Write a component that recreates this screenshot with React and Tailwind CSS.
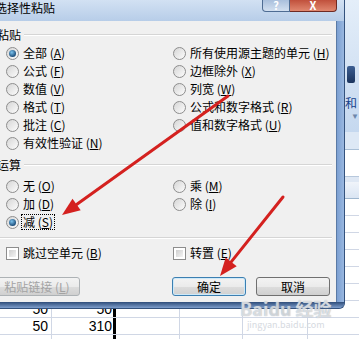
import React from 'react'

const pasteRows = [
  [{ t: '全部', k: 'A', on: true }, { t: '所有使用源主题的单元', k: 'H' }],
  [{ t: '公式', k: 'F' }, { t: '边框除外', k: 'X' }],
  [{ t: '数值', k: 'V' }, { t: '列宽', k: 'W' }],
  [{ t: '格式', k: 'T' }, { t: '公式和数字格式', k: 'R' }],
  [{ t: '批注', k: 'C' }, { t: '值和数字格式', k: 'U' }],
  [{ t: '有效性验证', k: 'N' }, null],
]

const opRows = [
  [{ t: '无', k: 'O' }, { t: '乘', k: 'M' }],
  [{ t: '加', k: 'D' }, { t: '除', k: 'I' }],
  [{ t: '减', k: 'S', on: true, focus: true }, null],
]

const Label = ({ t, k }) => (
  <span className="whitespace-nowrap">
    {t} (<span className="underline">{k}</span>)
  </span>
)

const Radio = ({ on }) => (
  <span className="w-[13px] h-[13px] shrink-0 rounded-full border border-[#8d8d8d] bg-linear-to-br from-[#d6d6d6] to-[#fcfcfc] flex items-center justify-center">
    {on && <span className="w-[7px] h-[7px] rounded-full bg-[radial-gradient(circle_at_40%_35%,#7cc3ee,#1d4f7c_70%)]" />}
  </span>
)

const Check = () => (
  <span className="w-[13px] h-[13px] shrink-0 border border-[#8d8d8d] bg-white p-[2px]">
    <span className="block w-full h-full bg-linear-to-br from-[#cfcfcf] to-[#f4f4f4]" />
  </span>
)

const Option = ({ o }) => {
  if (!o) return <div className="h-[18px]" />
  return (
    <div className="h-[18px] flex items-center">
      <Radio on={o.on} />
      {o.focus ? (
        <span className="ml-[2px] px-[1px] border border-dotted border-black leading-[14px]">
          <Label {...o} />
        </span>
      ) : (
        <span className="ml-[4px]">
          <Label {...o} />
        </span>
      )}
    </div>
  )
}

const Header = ({ text, className }) => (
  <div className={`h-[16px] flex items-center -ml-[3px] mr-[4px] ${className}`}>
    <span>{text}</span>
    <span className="flex-1 ml-[3px] border-t border-[#d5d5d5] border-b border-b-white" />
  </div>
)

const btn =
  'h-[19px] rounded-[3px] border flex items-center justify-center bg-[linear-gradient(#f3f3f3,#ebebeb_50%,#dddddd_50%,#d0d0d0)]'

function Dialog() {
  return (
    <div className="absolute left-0 top-0 w-[345px] h-[309px] flex flex-col bg-[#86a8d6] border-r border-b border-[#34527d] rounded-br-[6px] overflow-hidden">
      <div className="h-[21px] shrink-0 flex items-start bg-linear-to-b from-[#d2e1f3] to-[#b7cde8]">
        <span className="-ml-[5px] mt-[1px] leading-[13px] text-[12px] text-black">选择性粘贴</span>
        <div className="ml-auto mr-[7px] flex">
          <div className="w-[28px] h-[12px] rounded-bl-[4px] border border-t-0 border-[#4e6c93] bg-linear-to-b from-[#a9bfdc] to-[#d3e0f0] flex items-end justify-center text-[11px] leading-[11px] font-bold text-white">
            ?
          </div>
          <div className="w-[47px] h-[12px] rounded-br-[4px] border border-t-0 border-l-0 border-[#6e2a23] bg-linear-to-b from-[#c0503c] to-[#e0876f] flex items-end justify-center text-[11px] leading-[11px] font-bold text-white">
            X
          </div>
        </div>
      </div>
      <div className="flex-1 flex">
        <div className="w-[337px] bg-[#f0f0f0] border-r border-[#5a7aa5] flex flex-col text-[12px] leading-[14px] text-black">
          <Header text="粘贴" className="mt-[6px]" />
          <div className="mt-[1px] pl-[6px] grid grid-cols-[167px_1fr]">
            {pasteRows.map((r, i) => (
              <React.Fragment key={i}>
                <Option o={r[0]} />
                <Option o={r[1]} />
              </React.Fragment>
            ))}
          </div>
          <Header text="运算" className="mt-[5px]" />
          <div className="mt-[4px] pl-[6px] grid grid-cols-[167px_1fr]">
            {opRows.map((r, i) => (
              <React.Fragment key={i}>
                <Option o={r[0]} />
                <Option o={r[1]} />
              </React.Fragment>
            ))}
          </div>
          <div className="mt-[6px] mr-[4px] border-t border-[#d5d5d5] border-b border-b-white" />
          <div className="mt-[5px] pl-[6px] grid grid-cols-[167px_1fr]">
            <div className="h-[18px] flex items-center">
              <Check />
              <span className="ml-[4px]">
                <Label t="跳过空单元" k="B" />
              </span>
            </div>
            <div className="h-[18px] flex items-center">
              <Check />
              <span className="ml-[4px]">
                <Label t="转置" k="E" />
              </span>
            </div>
          </div>
          <div className="mt-[15px] flex">
            <div className={`${btn} -ml-[6px] w-[86px] border-[#adb2b5] text-[#a3a3a3] bg-[#f4f4f4]`}>
              <Label t="粘贴链接" k="L" />
            </div>
            <div className={`${btn} ml-[92px] w-[74px] border-[#3c7fb1] shadow-[inset_0_0_0_1px_#cde9f9]`}>
              确定
            </div>
            <div className={`${btn} ml-[10px] w-[74px] border-[#707070]`}>取消</div>
          </div>
        </div>
        <div className="flex-1 bg-linear-to-r from-[#7b9fd2] to-[#9ab8e0]" />
      </div>
      <div className="h-[6px] shrink-0 bg-linear-to-b from-[#2f4d7a] to-[#7f9fcd]" />
    </div>
  )
}

const rows = [
  [], [], [], [], [], [], ['50', '50'], ['50', '310'], [],
]

function Sheet() {
  return (
    <div className="flex flex-col font-['Liberation_Sans',sans-serif]">
      <div className="h-[132px] bg-linear-to-b from-[#e4eef9] to-[#c5d8ef] flex justify-end">
        <div className="w-[14px] flex flex-col items-start text-[#15428b]">
          <div className="mt-[66px] ml-[2px] w-[8px] h-[17px] rounded-[2px] bg-linear-to-b from-[#3d5f93] to-[#1c355e]" />
          <span className="mt-[13px] text-[12px] leading-[14px] font-['Noto_Sans_CJK_SC',sans-serif]">和</span>
          <span className="mt-[3px] ml-[6px] text-[8px] leading-[8px] text-[#6d86ab]">▼</span>
        </div>
      </div>
      <div className="h-[18px] bg-[#dde8f5] border-b border-[#a9bfd6]" />
      <div className="h-[27px] bg-white border-b border-[#b7c8dc]" />
      <div className="h-[5px] bg-[#dfe8f4]" />
      <div className="h-[17px] bg-linear-to-b from-[#f0f4fa] to-[#dae5f3] border-b border-[#9eb6ce]" />
      {rows.map((r, i) => (
        <div key={i} className="h-[17px] flex border-b border-[#d0d7e5] text-[14px] leading-[16px] text-black">
          <div className="w-[52px] shrink-0 border-r border-[#d0d7e5] flex items-center justify-end pr-[3px]">{r[0]}</div>
          <div className="w-[64px] shrink-0 border-r-[3px] border-black flex items-center justify-end pr-[1px]">{r[1]}</div>
          <div className="w-[64px] shrink-0 border-r border-[#d0d7e5]" />
          <div className="w-[63px] shrink-0 border-r border-[#d0d7e5]" />
          <div className="w-[65px] shrink-0 border-r border-[#d0d7e5]" />
          <div className="w-[64px] shrink-0 border-r border-[#d0d7e5]" />
        </div>
      ))}
    </div>
  )
}

function Arrows() {
  return (
    <svg className="absolute inset-0 pointer-events-none" width="359" height="339" viewBox="0 0 359 339">
      <line x1="228" y1="96" x2="76.6" y2="204.5" stroke="#d4211f" strokeWidth="3" strokeLinecap="round" />
      <polygon points="62,215 80.7,210.2 72.5,198.8" fill="#d4211f" />
      <line x1="283" y1="197" x2="231.2" y2="261.9" stroke="#d4211f" strokeWidth="3" strokeLinecap="round" />
      <polygon points="220,276 236.7,266.3 225.7,257.5" fill="#d4211f" />
    </svg>
  )
}

export default function App() {
  return (
    <div className="relative w-[359px] h-[339px] overflow-hidden bg-white font-['Noto_Sans_CJK_SC','Liberation_Sans',sans-serif]">
      <Sheet />
      <Dialog />
      <div className="absolute left-[240px] top-[300px] flex flex-col items-center pointer-events-none">
        <span className="text-[18px] leading-[17px] font-bold text-white/60 [text-shadow:0_0_1px_#9aa3ad]">
          Bai<span className="text-white/50">du</span> 经验
        </span>
        <span className="mt-[3px] text-[9px] leading-[10px] text-[#d6dadf]">jingyan.baidu.com</span>
      </div>
      <Arrows />
    </div>
  )
}
